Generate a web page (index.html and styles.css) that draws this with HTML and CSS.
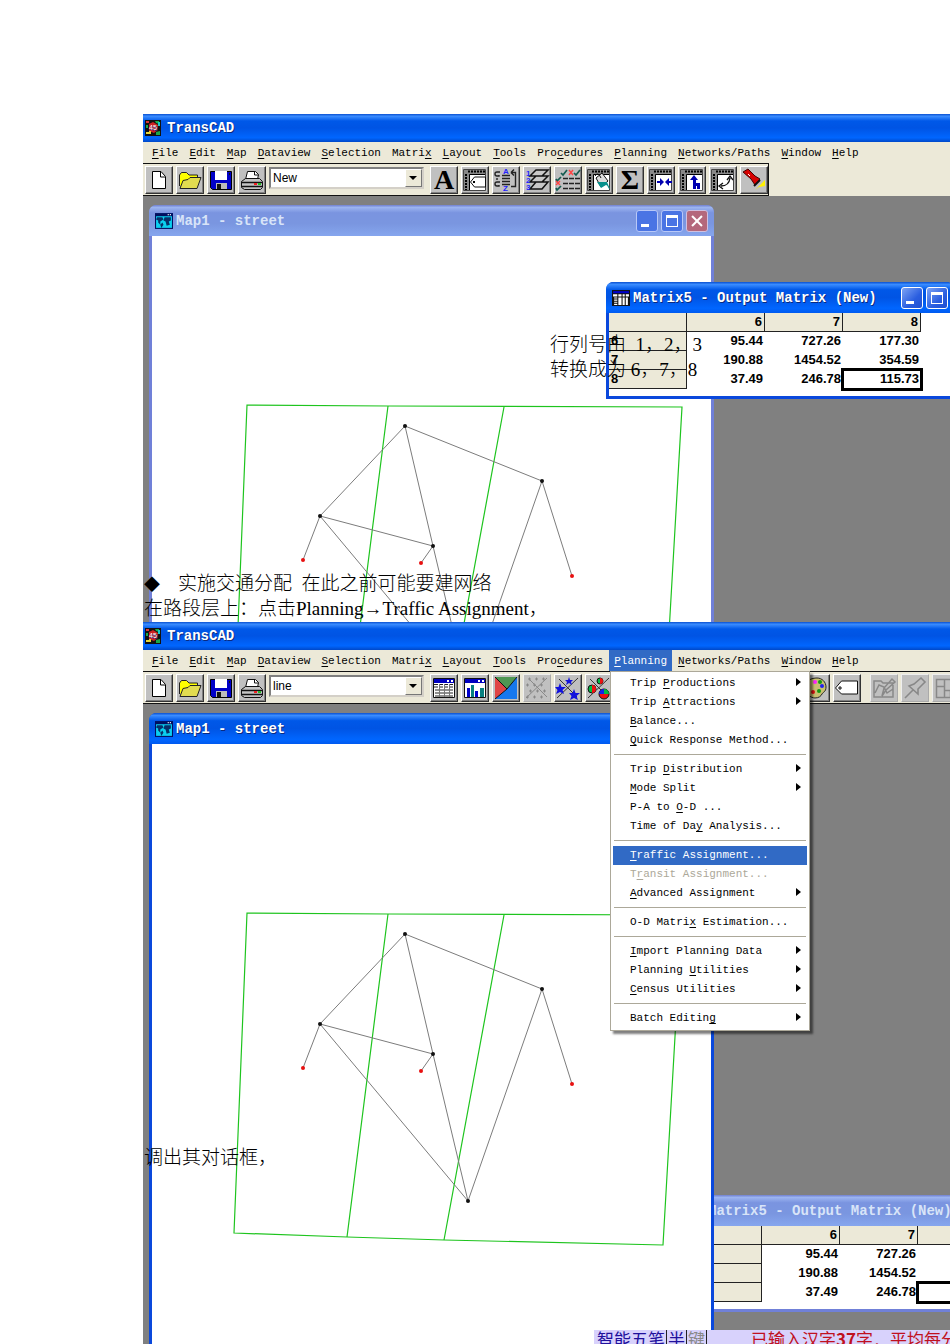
FILE: index.html
```html
<!DOCTYPE html>
<html lang="zh-CN">
<head>
<meta charset="utf-8">
<title>TransCAD</title>
<link rel="stylesheet" href="styles.css">
</head>
<body>
<svg class="defs" aria-hidden="true">
  <symbol id="logo" viewBox="0 0 16 16"><path fill="#111" d="M0 0h16v16H0z"/><path fill="#c22" d="M4 4l4-2 5 3v5l-4 3-5-2z"/><path fill="#19a84a" d="M10 1h4v3l-3-1zM11 12l4-1v4h-4zM1 5h2v3H1z"/><path fill="#1cc" d="M13 2h2v4h-2z"/><path fill="#e8d838" d="M1 12h3v-1h2v3H1z"/><path fill="#d33" d="M1 1h3v2H1z"/><text class="logo-num" x="4" y="10">45</text></symbol>
  <symbol id="globe" viewBox="0 0 17 15"><path fill="#001060" d="M0 0h17v15H0z"/><path fill="#0ad0f0" d="M1 3h15v11H1z"/><path fill="#06306a" d="M2 4h5l1 2-3 2v3l-2-2V7L1 6zM9 4h6v3l-2 1 1 3-3 1-1-4-2-1zM5 11l2-2 1 2-2 3z"/><path fill="#fff" d="M12 1h1v1h-1zM14 1h1v1h-1z"/></symbol>
  <symbol id="grid" viewBox="0 0 17 15"><path fill="#111" d="M0 0h17v15H0z"/><path fill="#00c" d="M1 1h15v2H1z"/><path fill="#fff" d="M1 4h4v2H1zM6 4h3v2H6zM10 4h2v2h-2zM13 4h3v2h-3zM2 7h3v1H2zM2 9h3v1H2zM2 11h3v1H2zM2 13h3v1H2zM6 7h3v7H6zM10 7h2v7h-2zM13 7h2v7h-2z"/></symbol>
  <symbol id="new" viewBox="0 0 28 28"><path d="M7.500 5.500H16l4.500 5V22.500h-13z" fill="#fff" stroke="#000"/><path d="M15.500 6v5H20" fill="none" stroke="#000"/></symbol>
  <symbol id="open" viewBox="0 0 28 28"><path d="M3.500 20V9l2-2.500h5L13 9h8.500v4" fill="#ff0" stroke="#222"/><path d="M4 22.500l3-8 5-1 2-2h11l-4 11z" fill="#e2dc50" stroke="#222"/></symbol>
  <symbol id="save" viewBox="0 0 28 28"><path d="M3.500 5.500h21v18h-19l-2-2z" fill="#0000c8" stroke="#000"/><path d="M8 5h12v9H8z" fill="#fff"/><path d="M9 17h11v6H9z" fill="#bbb"/><path d="M10 18h4v5h-4zM22 7h1v2h-1z" fill="#111"/></symbol>
  <symbol id="print" viewBox="0 0 28 28"><path d="M7.500 13.500l2-8h8l3 3-1 5" fill="#fff" stroke="#111"/><path d="M16.500 6v3h4" fill="none" stroke="#111"/><path d="M3.500 15.500l4-3h14l3 3v6l-2 2h-16l-3-2z" fill="#c4c4c4" stroke="#111"/><path d="M3 16.500h21M4 20.500h20" stroke="#111" stroke-width="1.500"/><path d="M16 17h3v2h-3z" fill="#e22"/><path d="M20 17h3v2h-3z" fill="#2b2"/></symbol>
  <symbol id="ruler" viewBox="0 0 28 28"><path d="M2.500 3.500h22v21h-22z" fill="#fff" stroke="#444"/><path d="M3 4h21v5H9v15H3z" fill="#888"/><path d="M7 5.500h17M5 8v16" stroke="#000" stroke-width="2" stroke-dasharray="2 1"/><path d="M8.500 24V8.500H24" stroke="#000" fill="none"/></symbol>
  <symbol id="label" viewBox="0 0 28 28"><use href="#ruler"/><path d="M9.500 16l4-5h11v10h-11z" fill="#fff" stroke="#111"/><path d="M12 16h2" stroke="#000" stroke-width="2"/></symbol>
  <symbol id="sort" viewBox="0 0 28 28"><path d="M10 9.500h8M10 12.500h8M10 15.500h8M10 18.500h8M8 6H5q-2 0-2 2t2 2h2V9M8 16H5q-2 0-2 2t2 2h2v-1M5 12v2M19 6.500h4.500v14H19M19 6.500l3-3M19 6.500l3 3" fill="none" stroke="#222" stroke-width="1.400"/><text class="icon-num" x="11" y="8">A</text><text class="icon-num" x="11" y="25">Z</text></symbol>
  <symbol id="layers" viewBox="0 0 28 28"><path d="M7 23l6-7h12l-6 7zM7 16l6-6h12l-6 6zM7 10l6-6h12l-6 6z" fill="#c8c8c8" stroke="#111" stroke-width="1.500"/><text class="icon-num" x="3" y="10">1</text><text class="icon-num" x="3" y="17">2</text><text class="icon-num" x="3" y="24">3</text></symbol>
  <symbol id="checks" viewBox="0 0 28 28"><path d="M9 12.500h17M9 17.500h17M9 22.500h17" stroke="#222" stroke-width="1.500" stroke-dasharray="5 1"/><path d="M7 7l2 2 4-5M20 7l2 2 4-5M2 13l1 2 4-4M2 22l1 2 4-4" fill="none" stroke="#155c50" stroke-width="1.700"/><path d="M15 4l4 5M19 4l-4 5M2 15l4 4M6 15l-4 4" stroke="#f44" stroke-width="1.400"/></symbol>
  <symbol id="bucket" viewBox="0 0 28 28"><use href="#ruler"/><path d="M11 12l6-5 6 8-7 6z" fill="#ddd" stroke="#111"/><path d="M12 16h10l3 7c-2 0-2-4-4-4l-5 3z" fill="#08908c"/><path d="M10 10q3-5 6 2" fill="none" stroke="#111"/></symbol>
  <symbol id="merge" viewBox="0 0 28 28"><use href="#ruler"/><path d="M10 15h3v-3l4 4-4 4v-3h-3zM25 15h-3v-3l-4 4 4 4v-3h3z" fill="#0000b0"/></symbol>
  <symbol id="upturn" viewBox="0 0 28 28"><use href="#ruler"/><path d="M15 23v-9h-3l4-5 4 5h-2v3h4v6h-3v-3h-1v3z" fill="#0000b0"/></symbol>
  <symbol id="swing" viewBox="0 0 28 28"><use href="#ruler"/><path d="M12 20q8 0 9-8M18 14l3-4 3 4M14 17l-4 3 4 3" fill="none" stroke="#111" stroke-width="1.300"/></symbol>
  <symbol id="torch" viewBox="0 0 28 28"><path d="M15 24l10-10v6l-6 1z" fill="#fff000"/><path d="M3 6l5-3 7 7 5 3-5 6-4-6z" fill="#d60000" stroke="#400"/><path d="M14 20l6-6" stroke="#111" stroke-width="2"/><path d="M8 8l2 2" stroke="#fff"/></symbol>
  <symbol id="table" viewBox="0 0 28 28"><path d="M3.500 4.500h21v19h-21z" fill="#fff" stroke="#111"/><path d="M4 5h20v4H4z" fill="#0000c0"/><path d="M17 6h2v2h-2zM21 6h2v2h-2z" fill="#fff"/><path d="M4 10.500h20M4 13h20M5 16h18M5 19h18M5 22h18" stroke="#222" stroke-dasharray="4 1"/><path d="M9.500 10v13M14.500 10v13M19.500 10v13" stroke="#777"/></symbol>
  <symbol id="chart" viewBox="0 0 28 28"><path d="M3.500 4.500h21v19h-21z" fill="#fff" stroke="#111"/><path d="M4 5h20v4H4z" fill="#0000c0"/><path d="M17 6h2v2h-2zM21 6h2v2h-2z" fill="#fff"/><path d="M6 14h3v9H6zM14 17h3v6h-3z" fill="#00c"/><path d="M10 11h3v12h-3zM19 14h4v9h-4z" fill="#078080"/></symbol>
  <symbol id="theme" viewBox="0 0 28 28"><path d="M3 3v22l12-10z" fill="#e04545"/><path d="M3 3l12 12L25 3z" fill="#4e9653"/><path d="M25 3v22H3l12-10z" fill="#1678ee"/><path d="M3 3l12 12L25 3M3 25l12-10" fill="none" stroke="#111"/></symbol>
  <symbol id="dots" viewBox="0 0 28 28"><path d="M3 24L24 4M6 5l18 18" stroke="#888"/><path d="M5 5h20M3 11h20M6 17h20M3 23h20" stroke="#888" stroke-width="3" stroke-dasharray="1 6" stroke-dashoffset="-1"/><path d="M5 5h20M3 11h20M6 17h20M3 23h20" stroke="#888" stroke-dasharray="3 4"/></symbol>
  <symbol id="stars" viewBox="0 0 28 28"><path d="M3 24L24 4M5 5l18 18" stroke="#333"/><path id="st" d="M6 9l1.500 4H12l-3.500 3 1.500 4-4-2-4 2 1.500-4L1 13h3.500z" fill="#11d"/><use href="#st" x="14" y="6"/><path d="M15 3l1 3h3l-2 2 1 3-3-2-3 2 1-3-2-2h3z" fill="#11d"/></symbol>
  <symbol id="pies" viewBox="0 0 28 28"><path d="M3 24L24 4M5 5l18 18" stroke="#333"/><g stroke="#111"><circle cx="7" cy="15" r="4" fill="#0b4"/><circle cx="15" cy="7" r="3" fill="#0b4"/><circle cx="19" cy="20" r="5" fill="#e11"/></g><path d="M7 15v-4a4 4 0 010 8zM15 7V4a3 3 0 010 6z" fill="#e11"/><path d="M19 20v-5a5 5 0 00-5 5z" fill="#12e"/><path d="M19 20v-5a5 5 0 015 5z" fill="#0b4"/></symbol>
  <symbol id="palette" viewBox="0 0 28 28"><path d="M3 14C3 6 10 4 15 4s9 4 9 9-3 5-4 7-3 4-7 4S3 20 3 14z" fill="#c8c070" stroke="#222"/><circle cx="13" cy="8" r="2" fill="#f2f"/><circle cx="20" cy="12" r="2" fill="#22e"/><circle cx="18" cy="8" r="2" fill="#191"/><circle cx="17" cy="17" r="2" fill="#191"/><circle cx="11" cy="18" r="2" fill="#d11"/></symbol>
  <symbol id="tag" viewBox="0 0 28 28"><path d="M2.500 14l6-7h16v13h-16z" fill="#fff" stroke="#111"/><path d="M5 14h4M7 12v4" stroke="#111"/></symbol>
  <symbol id="mapedit" viewBox="0 0 28 28"><path d="M4 7h7l2 2h10v14H4zM5 19l4-8 5 2 3 6 6-4M12 22l2-8 8-9 3 3-9 8z" fill="none" stroke="#888" stroke-width="1.500"/></symbol>
  <symbol id="pin" viewBox="0 0 28 28"><path d="M4 24l8-8M8 12l9 8v-5l7-7-4-4-7 6z" fill="none" stroke="#888" stroke-width="1.600"/></symbol>
  <symbol id="plan" viewBox="0 0 28 28"><path d="M4.500 5.500h20v18h-20zM4 12.500h8M12.500 5v18M12 16.500h12M18.500 16v8" fill="none" stroke="#888" stroke-width="1.500"/></symbol>
  <symbol id="streets" viewBox="152 744 559 600">
    <g fill="none" stroke="#1ec41e" stroke-width="1.200"><path d="M247 913L388 914L682 915L663 1245L444 1240L347 1237L234 1233Z"/><path d="M388 914L347 1237M504 915L444 1240"/></g>
    <path fill="none" stroke="#7c7c7c" d="M303 1068L320 1024L405 934L542 989L572 1084M405 934L433 1054L468 1201L320 1024L433 1054L421 1071M542 989L468 1201"/>
    <g fill="#111"><circle cx="405" cy="934" r="2"/><circle cx="542" cy="989" r="2"/><circle cx="320" cy="1024" r="2"/><circle cx="433" cy="1054" r="2"/><circle cx="468" cy="1201" r="2"/></g>
    <g fill="#e81010"><circle cx="303" cy="1068" r="2"/><circle cx="421" cy="1071" r="2"/><circle cx="572" cy="1084" r="2"/></g>
  </symbol>
</svg>

<main class="page">
  <section class="app app-first">
    <header class="app-title"><svg class="logo"><use href="#logo"/></svg>TransCAD</header>
    <nav class="menubar">
      <button><u>F</u>ile</button><button><u>E</u>dit</button><button><u>M</u>ap</button><button><u>D</u>ataview</button><button><u>S</u>election</button><button>Matri<u>x</u></button><button><u>L</u>ayout</button><button><u>T</u>ools</button><button>Pro<u>c</u>edures</button><button><u>P</u>lanning</button><button><u>N</u>etworks/Paths</button><button><u>W</u>indow</button><button><u>H</u>elp</button>
    </nav>
    <div class="toolrow">
      <div class="toolbar">
        <button aria-label="New"><svg><use href="#new"/></svg></button>
        <button aria-label="Open"><svg><use href="#open"/></svg></button>
        <button aria-label="Save"><svg><use href="#save"/></svg></button>
        <button aria-label="Print"><svg><use href="#print"/></svg></button>
        <span class="combo"><select aria-label="Layer"><option>New</option></select></span>
        <button class="glyph">A</button>
        <button aria-label="Labels"><svg><use href="#label"/></svg></button>
        <button aria-label="Sort"><svg><use href="#sort"/></svg></button>
        <button aria-label="Layers"><svg><use href="#layers"/></svg></button>
        <button aria-label="Selection"><svg><use href="#checks"/></svg></button>
        <button aria-label="Fill"><svg><use href="#bucket"/></svg></button>
        <button class="glyph">Σ</button>
        <button aria-label="Merge"><svg><use href="#merge"/></svg></button>
        <button aria-label="Aggregate"><svg><use href="#upturn"/></svg></button>
        <button aria-label="Transpose"><svg><use href="#swing"/></svg></button>
        <button aria-label="Find"><svg><use href="#torch"/></svg></button>
      </div>
    </div>
    <div class="desktop">
      <article class="window map inactive">
        <header class="win-title"><svg><use href="#globe"/></svg><h2>Map1 - street</h2>
          <button class="min" aria-label="Minimize"></button><button class="max" aria-label="Maximize"></button><button class="close" aria-label="Close"></button></header>
        <svg class="canvas"><use href="#streets" width="559" height="600"/></svg>
      </article>
      <article class="window matrix matrix-front">
        <header class="win-title"><svg><use href="#grid"/></svg><h2>Matrix5 - Output Matrix (New)</h2>
          <button class="min" aria-label="Minimize"></button><button class="max" aria-label="Maximize"></button></header>
        <div class="sheet"><table>
          <thead><tr><td></td><th scope="col">6</th><th scope="col">7</th><th scope="col">8</th></tr></thead>
          <tbody>
            <tr><th scope="row">6</th><td>95.44</td><td>727.26</td><td>177.30</td></tr>
            <tr><th scope="row">7</th><td>190.88</td><td>1454.52</td><td>354.59</td></tr>
            <tr><th scope="row">8</th><td>37.49</td><td>246.78</td><td class="current">115.73</td></tr>
          </tbody>
        </table></div>
      </article>
    </div>
    <p class="note note-rows">行列号由&ensp;1，2，3<br>转换成为 6，7，8</p>
    <p class="note note-assign"><span class="diamond">◆</span>实施交通分配&ensp;在此之前可能要建网络<br>在路段层上：点击Planning→Traffic Assignment，</p>
  </section>

  <section class="app app-second">
    <header class="app-title"><svg class="logo"><use href="#logo"/></svg>TransCAD</header>
    <nav class="menubar">
      <button><u>F</u>ile</button><button><u>E</u>dit</button><button><u>M</u>ap</button><button><u>D</u>ataview</button><button><u>S</u>election</button><button>Matri<u>x</u></button><button><u>L</u>ayout</button><button><u>T</u>ools</button><button>Pro<u>c</u>edures</button><button class="open"><u>P</u>lanning</button><button><u>N</u>etworks/Paths</button><button><u>W</u>indow</button><button><u>H</u>elp</button>
    </nav>
    <div class="toolrow">
      <div class="toolbar">
        <button aria-label="New"><svg><use href="#new"/></svg></button>
        <button aria-label="Open"><svg><use href="#open"/></svg></button>
        <button aria-label="Save"><svg><use href="#save"/></svg></button>
        <button aria-label="Print"><svg><use href="#print"/></svg></button>
        <span class="combo"><select aria-label="Layer"><option>line</option></select></span>
        <button aria-label="Dataview"><svg><use href="#table"/></svg></button>
        <button aria-label="Chart"><svg><use href="#chart"/></svg></button>
        <button aria-label="Color theme"><svg><use href="#theme"/></svg></button>
        <button aria-label="Dot density" disabled><svg><use href="#dots"/></svg></button>
        <button aria-label="Symbols"><svg><use href="#stars"/></svg></button>
        <button aria-label="Pie theme"><svg><use href="#pies"/></svg></button>
        <span class="covered"></span>
        <button aria-label="Style"><svg><use href="#palette"/></svg></button>
        <button aria-label="Tag"><svg><use href="#tag"/></svg></button>
        <span class="divider"></span>
        <button aria-label="Edit map" disabled><svg><use href="#mapedit"/></svg></button>
        <button aria-label="Pin" disabled><svg><use href="#pin"/></svg></button>
        <button aria-label="Layout" disabled><svg><use href="#plan"/></svg></button>
      </div>
    </div>
    <div class="desktop">
      <article class="window matrix matrix-back inactive">
        <header class="win-title"><svg><use href="#grid"/></svg><h2>Matrix5 - Output Matrix (New)</h2></header>
        <div class="sheet"><table>
          <thead><tr><td></td><th scope="col">6</th><th scope="col">7</th><th scope="col"></th></tr></thead>
          <tbody>
            <tr><th scope="row"></th><td>95.44</td><td>727.26</td><td></td></tr>
            <tr><th scope="row"></th><td>190.88</td><td>1454.52</td><td></td></tr>
            <tr><th scope="row"></th><td>37.49</td><td>246.78</td><td class="current"></td></tr>
          </tbody>
        </table></div>
      </article>
      <article class="window map">
        <header class="win-title"><svg><use href="#globe"/></svg><h2>Map1 - street</h2></header>
        <svg class="canvas"><use href="#streets" width="559" height="600"/></svg>
      </article>
      <div class="ime"><span>智能五笔</span><span>半</span><span class="off">键</span><p>已输入汉字<b>37</b>字．平均每分</p></div>
    </div>
    <div class="popup" role="menu">
      <button class="sub">Trip <u>P</u>roductions</button>
      <button class="sub">Trip <u>A</u>ttractions</button>
      <button><u>B</u>alance...</button>
      <button><u>Q</u>uick Response Method...</button>
      <hr>
      <button class="sub">Trip <u>D</u>istribution</button>
      <button class="sub"><u>M</u>ode Split</button>
      <button>P-A to <u>O</u>-D ...</button>
      <button>Time of Da<u>y</u> Analysis...</button>
      <hr>
      <button class="chosen"><u>T</u>raffic Assignment...</button>
      <button disabled>T<u>r</u>ansit Assignment...</button>
      <button class="sub"><u>A</u>dvanced Assignment</button>
      <hr>
      <button>O-D Matri<u>x</u> Estimation...</button>
      <hr>
      <button class="sub"><u>I</u>mport Planning Data</button>
      <button class="sub">Planning <u>U</u>tilities</button>
      <button class="sub"><u>C</u>ensus Utilities</button>
      <hr>
      <button class="sub">Batch Editin<u>g</u></button>
    </div>
    <p class="note note-dialog">调出其对话框，</p>
  </section>
</main>
</body>
</html>
```
FILE: styles.css
```css
*, *::before, *::after { box-sizing: border-box; }
body { margin: 0; background: #fff; color: #000; font-family: "Liberation Sans", "Noto Sans CJK SC", sans-serif; }
button { margin: 0; padding: 0; border: 0; background: none; color: inherit; font: inherit; flex: none; }
.defs { position: absolute; width: 0; height: 0; }
.logo-num { font: 7px "Liberation Sans", sans-serif; fill: #fff; }
.icon-num { font: bold 8px "Liberation Sans", sans-serif; fill: #22f; }

.page { display: flex; flex-direction: column; min-height: 100vh; padding: 114px 0 0 143px; overflow: hidden; }
.app { position: relative; display: flex; flex-direction: column; background: #ece9d8; }
.app-first { height: 508px; }
.app-second { flex: 1; min-height: 722px; }

.app-title { display: flex; align-items: center; gap: 6px; height: 28px; padding-left: 2px; color: #fff; font: bold 14px "Liberation Mono", monospace; text-shadow: 1px 1px #0a2a80; background: linear-gradient(#0a50d0, #3a8cff 8%, #0058e8 25%, #0054e4 50%, #0066ff 85%, #0048c8); }
.logo { width: 16px; height: 16px; }

.menubar { display: flex; gap: 1px; height: 21px; padding-left: 4px; font: 11px/22px "Liberation Mono", monospace; white-space: nowrap; }
.menubar button { padding: 0 5px; }
.menubar .open { background: #316ac5; color: #fff; }
u { text-underline-offset: 2px; }

.toolrow { display: flex; height: 33px; }
.toolbar { display: flex; flex: none; align-items: center; gap: 3px; height: 33px; padding: 0 0 0 2px; border: 1px solid #111; border-left: 0; }
.toolbar button { width: 28px; height: 28px; background: #c0c0c0; border: 1px solid; border-color: #fff #333 #333 #fff; box-shadow: inset -1px -1px #808080; }
.toolbar button:disabled { border-color: #eee #aaa #aaa #eee; box-shadow: none; }
.toolbar button svg { display: block; width: 28px; height: 28px; margin: -1px; }
.toolbar .glyph { font: bold 28px/26px "Liberation Serif", serif; }
.combo { position: relative; width: 155px; height: 22px; margin: 0 3px 4px 0; }
.combo select { width: 100%; height: 100%; padding: 0 0 0 2px; appearance: none; background: #fff; border: 2px solid; border-color: #808080 #d4d0c8 #d4d0c8 #808080; border-radius: 0; font: 12px "Liberation Sans", sans-serif; color: #000; }
.combo::before { content: ""; position: absolute; right: 2px; top: 2px; width: 17px; height: 18px; background: #ece9d8; border: 1px solid; border-color: #fff #777 #777 #fff; }
.combo::after { content: ""; position: absolute; right: 7px; top: 9px; border: 4px solid transparent; border-top-color: #000; border-bottom: 0; }
.covered { width: 183px; }
.divider { width: 3px; }

.desktop { position: relative; flex: 1; background: #808080; overflow: hidden; }
.window { position: absolute; display: flex; flex-direction: column; border: 3px solid #0a48dc; border-top: 0; border-radius: 8px 8px 0 0; background: #0a48dc; }
.window.inactive { border-color: #7080d8; background: #7080d8; }
.win-title { display: flex; flex: none; align-items: center; gap: 3px; height: 31px; margin: 0 -3px; padding: 2px 6px; border-radius: 7px 7px 0 0; color: #fff; text-shadow: 1px 1px #0a2a80; background: linear-gradient(#0a50d0, #3a8cff 8%, #0058e8 25%, #0054e4 50%, #0066ff 85%, #005af0); }
.inactive .win-title { color: #d8e4f8; text-shadow: none; background: linear-gradient(#7080d0, #9cb4f0 8%, #7a94e0 25%, #7a96e0 60%, #86a6ee); }
.win-title svg { flex: none; width: 18px; height: 16px; }
.win-title h2 { flex: 1; margin: 0; font: bold 14px "Liberation Mono", monospace; white-space: nowrap; }
.map { left: 6px; top: 9px; bottom: 0; width: 565px; border-bottom: 0; }
.map .canvas { display: block; flex: 1; min-height: 0; width: 559px; background: #fff; overflow: hidden; }

.min, .max, .close { position: relative; width: 22px; height: 22px; border: 1px solid #fff; border-radius: 3px; background: linear-gradient(135deg, #7ea4f4, #2a5ee0 60%, #2050d0); }
.inactive .min, .inactive .max { border-color: #b8c8f8; background: #4a74e4; }
.inactive .close { border-color: #d0c0e0; background: #b4687c; }
.min::after { content: ""; position: absolute; left: 4px; bottom: 4px; width: 8px; height: 3px; background: #fff; }
.max::after { content: ""; position: absolute; left: 4px; top: 4px; width: 12px; height: 12px; border: 1px solid #fff; border-top-width: 3px; }
.close::before, .close::after { content: ""; position: absolute; left: 3px; top: 9px; width: 14px; height: 2px; background: #fff; transform: rotate(45deg); }
.close::after { transform: rotate(-45deg); }

.matrix-front { left: 463px; top: 86px; width: 348px; }
.matrix-back { left: 538px; top: 491px; width: 348px; }
.sheet { padding-bottom: 7px; background: #fff; }
table { border-collapse: separate; border-spacing: 0; table-layout: fixed; width: 312px; font: bold 13px "Liberation Sans", sans-serif; }
td, th { width: 78px; height: 19px; padding: 0 2px 2px; text-align: right; line-height: 16px; }
thead th, thead td, tbody th { background: #ece9d8; border-right: 1px solid #222; border-bottom: 1px solid #222; padding-bottom: 1px; }
thead td, tbody th { text-align: left; padding-left: 2px; }
tbody .current { outline: 3px solid #000; outline-offset: -1px; }

.popup { position: absolute; left: 467px; top: 49px; width: 200px; padding: 2px; display: flex; flex-direction: column; background: #fff; border: 1px solid #aca899; box-shadow: 3px 3px 2px rgba(0, 0, 0, .5); font: 11px/19px "Liberation Mono", monospace; }
.popup button { position: relative; height: 19px; padding-left: 17px; text-align: left; white-space: nowrap; }
.popup button:disabled { color: #aca899; }
.popup .chosen { background: #316ac5; color: #fff; }
.popup .sub::after { content: ""; position: absolute; right: 6px; top: 4px; border: 4px solid transparent; border-left: 5px solid #000; border-right: 0; }
.popup hr { width: 192px; height: 1px; margin: 4px 0 5px 1px; border: 0; background: #aca899; }

.ime { position: absolute; left: 451px; right: 0; bottom: 0; display: flex; height: 14px; padding-left: 2px; overflow: hidden; background: #d8d2fc; color: #20109c; font: 17px/18px "Noto Sans CJK SC", sans-serif; white-space: nowrap; }
.ime span { height: 18px; padding: 0 1px; border-right: 1px solid #222; }
.ime .off { color: #888; }
.ime p { margin: 0 0 0 44px; color: #c01020; }

.note { position: absolute; margin: 0; font: 300 19px/25px "Liberation Serif", "Noto Sans CJK SC", serif; white-space: nowrap; }
.note-rows { left: 407px; top: 218px; }
.note-assign { left: 1px; top: 457px; }
.note-dialog { left: 1px; top: 523px; }
.diamond { display: inline-block; width: 34px; font-size: 16px; line-height: 16px; }
```
